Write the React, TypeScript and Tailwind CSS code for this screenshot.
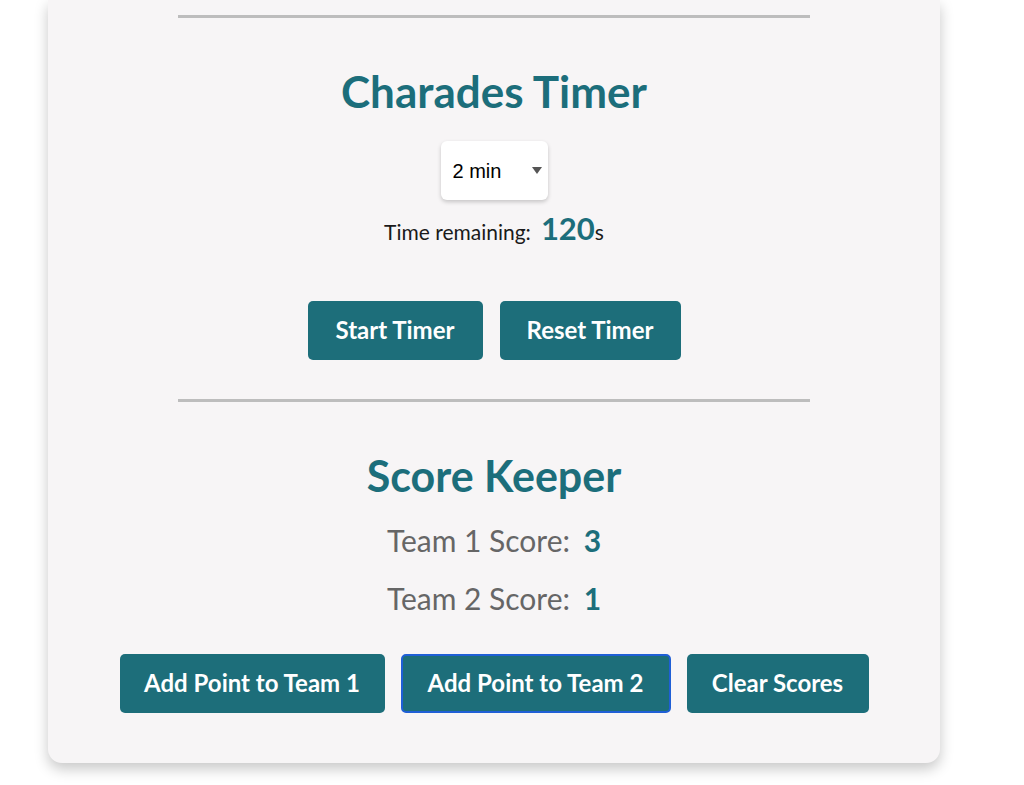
import { useState } from "react"

const teal = "text-[#1c6e7b]"

function Btn({ label, focused, onClick, w }: { label: string; focused?: boolean; onClick?: () => void; w: string }) {
  return (
    <button
      onClick={onClick}
      className={`${w} h-[59px] rounded-[5px] bg-[#1d6e7a] text-white text-[24px] font-bold ${
        focused ? "border-2 border-[#1f5fd6]" : "border-2 border-transparent"
      }`}
    >
      {label}
    </button>
  )
}

export default function App() {
  const [minutes, setMinutes] = useState(2)
  const [team1, setTeam1] = useState(3)
  const [team2, setTeam2] = useState(1)

  return (
    <div className="min-h-screen bg-white" style={{ fontFamily: "Lato, 'Noto Sans', sans-serif" }}>
      <div className="ml-[48px] w-[892px] h-[763px] bg-[#f7f5f6] rounded-b-[14px] shadow-[0_6px_14px_rgba(0,0,0,0.22)] pt-[15px] flex flex-col items-center">
        <hr className="w-[632px] border-0 h-[3px] bg-[#bdbdbd]" />

        {/* timer */}
        <h2 className={`mt-[47px] text-[44px] leading-[52px] font-bold ${teal}`}>Charades Timer</h2>
        <select
          value={minutes}
          onChange={e => setMinutes(Number(e.target.value))}
          className="mt-[24px] w-[107px] h-[59px] bg-white rounded-[6px] shadow-[0_2px_4px_rgba(0,0,0,0.2)] pl-[12px] text-[20px] text-black appearance-none outline-none"
          style={{ fontFamily: "'Liberation Sans', Arial, sans-serif" }}
        >
          <option value={1}>1 min</option>
          <option value={2}>2 min</option>
          <option value={3}>3 min</option>
        </select>
        <svg className="-mt-[33px] ml-[86px] pointer-events-none" width="10" height="7" viewBox="0 0 10 7">
          <path d="M0 0h10L5 7z" fill="#555" />
        </svg>
        <p className="mt-[31px] text-[21px] text-[#1a1a1a] flex items-baseline">
          Time remaining:
          <span className={`ml-[10px] text-[31px] font-bold ${teal}`}>{minutes * 60}</span>s
        </p>

        <div className="mt-[49px] flex gap-[17px]">
          <Btn w="w-[175px]" label="Start Timer" />
          <Btn w="w-[181px]" label="Reset Timer" />
        </div>

        <hr className="mt-[39px] w-[632px] border-0 h-[3px] bg-[#bdbdbd]" />

        {/* scores */}
        <h2 className={`mt-[48px] text-[43px] leading-[52px] font-bold ${teal}`}>Score Keeper</h2>
        <p className="mt-[16px] text-[30px] text-[#666]">
          Team 1 Score: <span className={`ml-[6px] font-bold ${teal}`}>{team1}</span>
        </p>
        <p className="mt-[13px] text-[30px] text-[#666]">
          Team 2 Score: <span className={`ml-[6px] font-bold ${teal}`}>{team2}</span>
        </p>

        <div className="mt-[33px] flex gap-[16px]">
          <Btn w="w-[265px]" label="Add Point to Team 1" onClick={() => setTeam1(t => t + 1)} />
          <Btn w="w-[270px]" label="Add Point to Team 2" focused onClick={() => setTeam2(t => t + 1)} />
          <Btn w="w-[182px]" label="Clear Scores" onClick={() => { setTeam1(0); setTeam2(0) }} />
        </div>
      </div>
    </div>
  )
}
